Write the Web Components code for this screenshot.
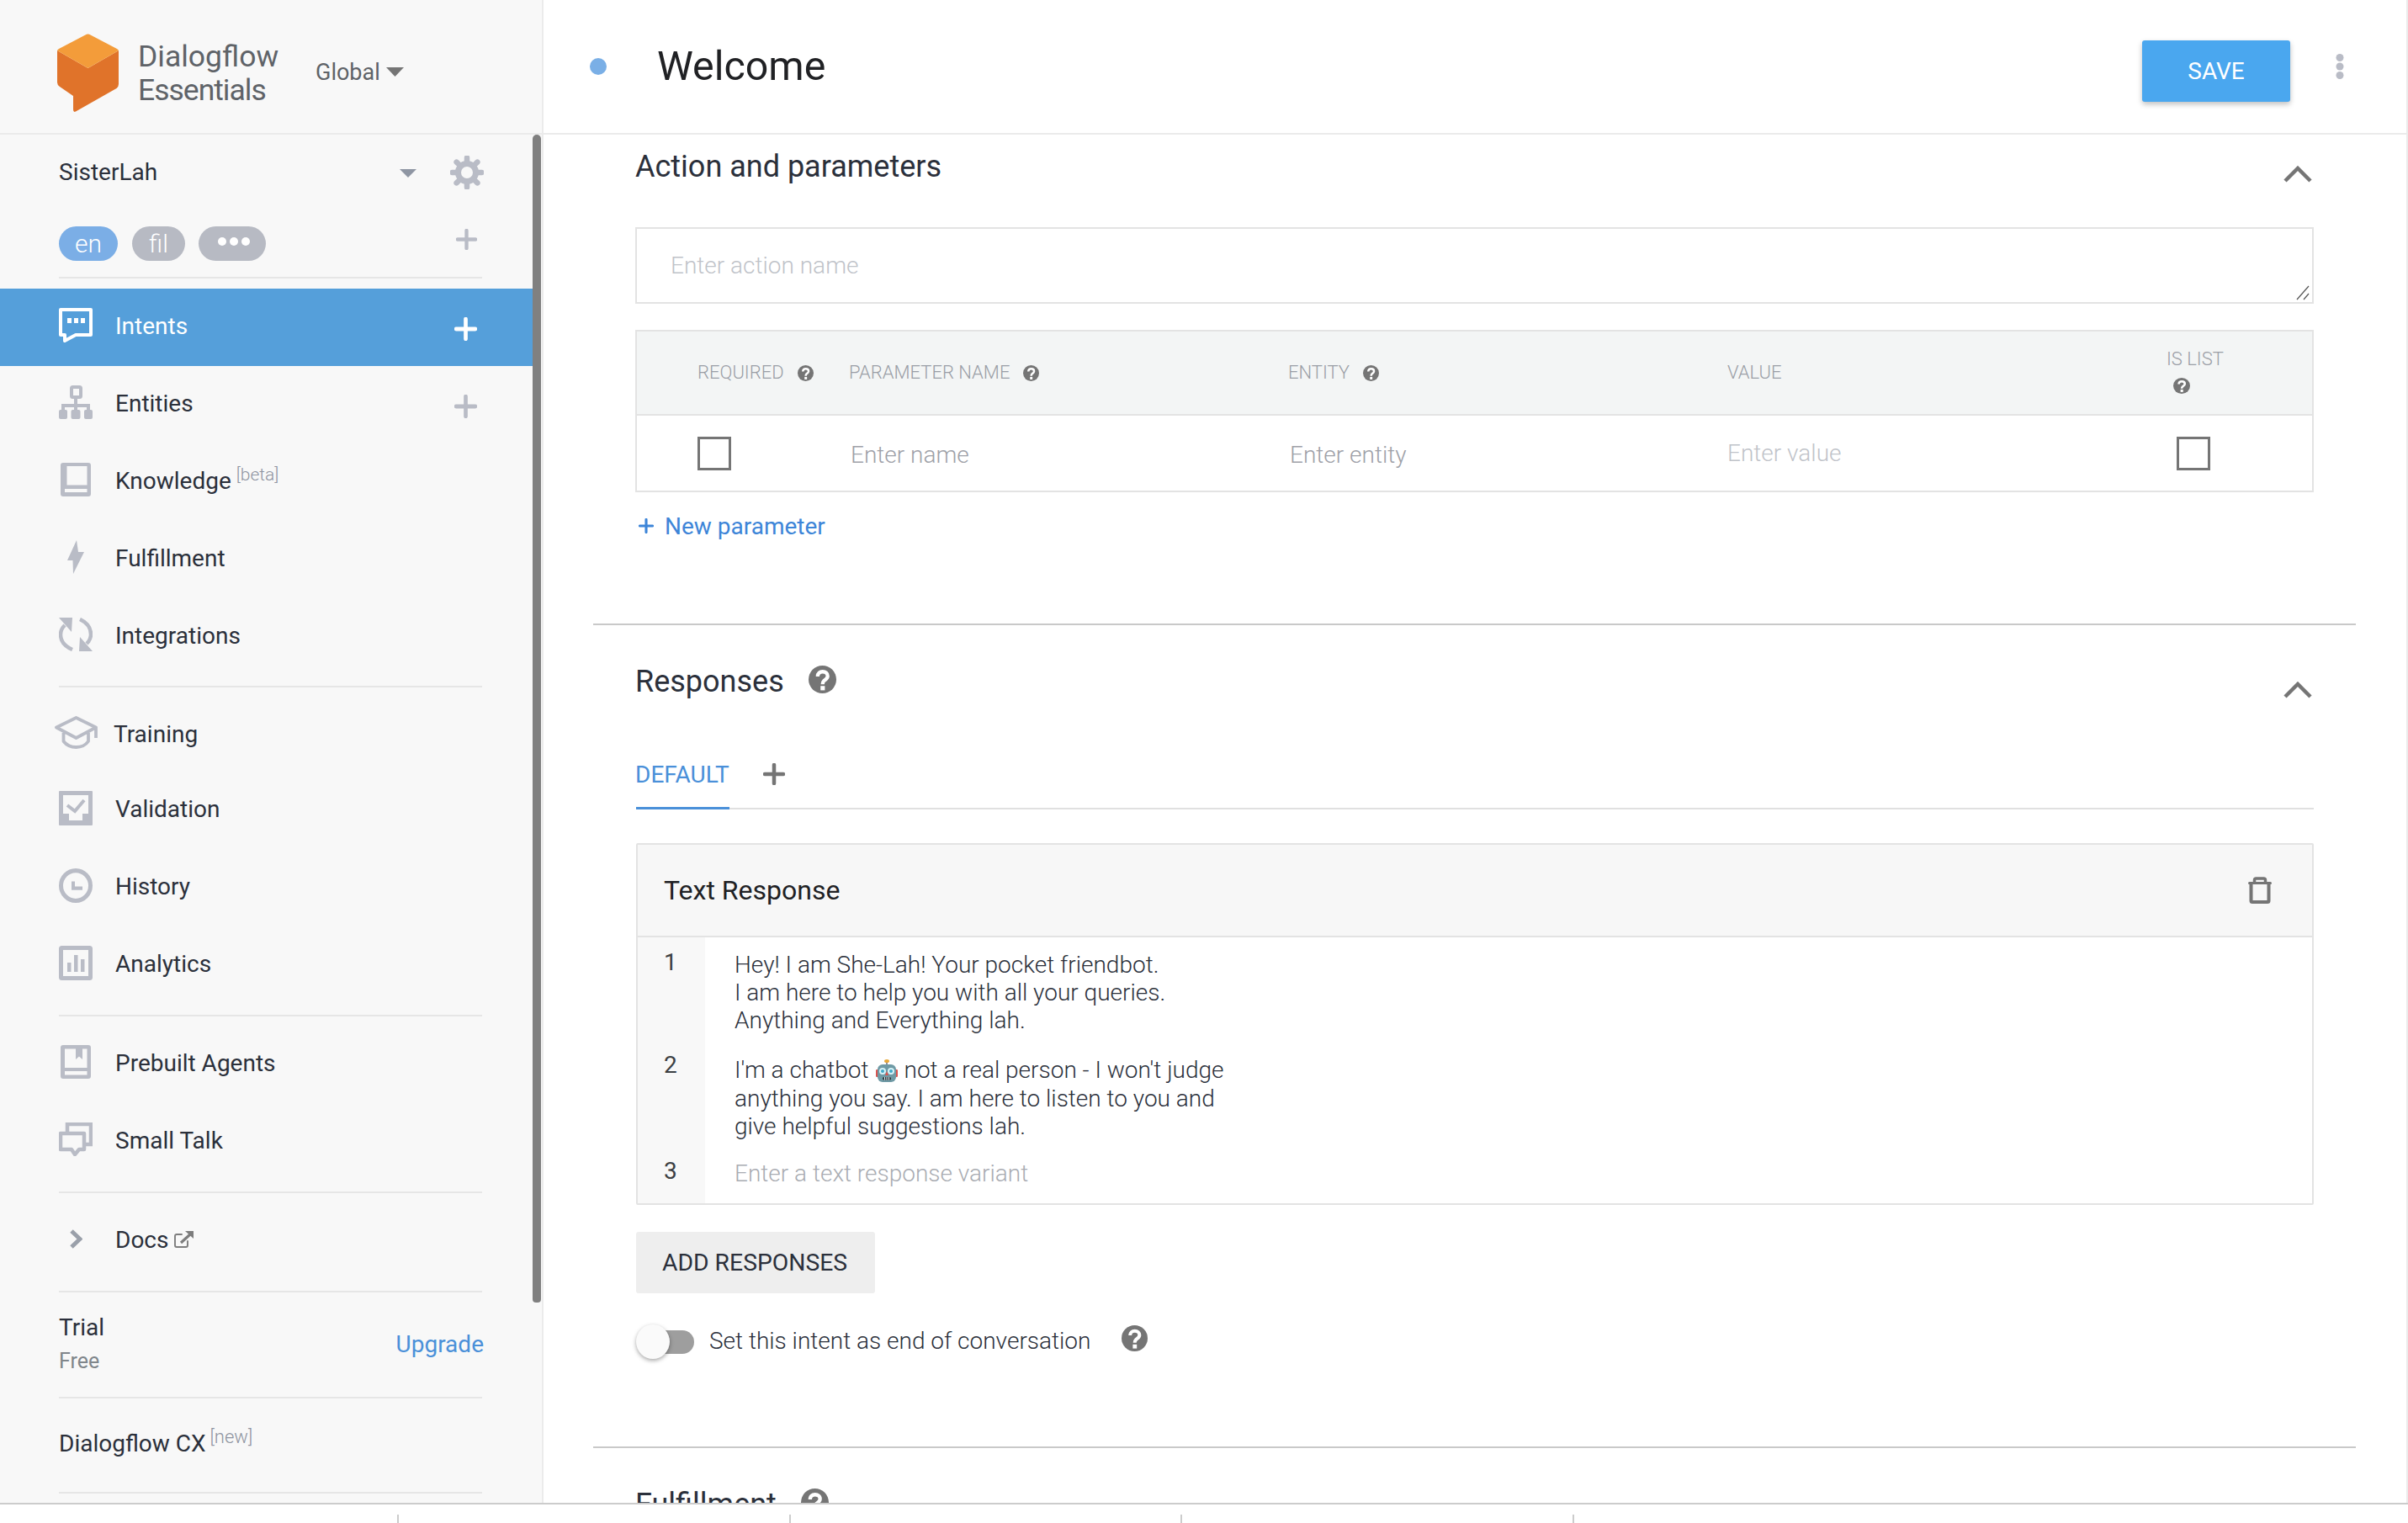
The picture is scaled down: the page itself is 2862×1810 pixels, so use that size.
<!DOCTYPE html>
<html lang="en">
<head>
<meta charset="utf-8">
<title>Dialogflow Essentials</title>
<style>
html,body{margin:0;padding:0;background:#fff;font-family:Roboto,"Liberation Sans",sans-serif;}
</style>
</head>
<body>
<df-app></df-app>
<script>
const ICONS = {
  logo:{vb:'0 0 73 93',s:`<path fill="#e0732a" d="M0 20L36.500 41L73 20V60Q73 63 70.500 65L22 92.500Q19 94 19 90V74L3 63Q0 61 0 58Z"/><path fill="#f39c3a" d="M33.500 1.500Q36.500-.5 39.500 1.500L71 18Q73 19.500 73 20L36.500 41L0 20Q0 19.500 2 18Z"/>`},
  caret:{vb:'0 0 20 11',s:`<path fill="currentColor" d="M0 0H20L10 11Z"/>`},
  gear:{vb:'0 0 40 40',s:`<circle cx="20" cy="20" r="10.500" fill="none" stroke="currentColor" stroke-width="7"/><g stroke="currentColor" stroke-width="6.500" stroke-linecap="round"><path d="M20 2.500V7M20 33V37.500M2.500 20H7M33 20H37.500M7.600 7.600L10.800 10.800M29.200 29.200L32.400 32.400M32.400 7.600L29.200 10.800M10.800 29.200L7.600 32.400"/></g>`},
  plus:{vb:'0 0 26 26',s:`<path d="M13 2V24M2 13H24" stroke="currentColor" stroke-width="4.500" stroke-linecap="round" fill="none"/>`},
  intents:{vb:'0 0 40 41',s:`<path d="M2 2H38V32H20L7 39V32H2Z" fill="none" stroke="currentColor" stroke-width="4" stroke-linejoin="round"/><path fill="currentColor" d="M10 12h5v6h-5zM18 12h5v6h-5zM26 12h5v6h-5z"/>`},
  entities:{vb:'0 0 40 40',s:`<path fill="none" stroke="currentColor" stroke-width="4" d="M20 14V24M5 32V24H35V32M20 24V32"/><rect x="15" y="2" width="11" height="12" rx="1.500" fill="none" stroke="currentColor" stroke-width="4"/><rect x="0" y="29" width="10" height="11" rx="2" fill="currentColor"/><rect x="14.500" y="29" width="11" height="11" rx="2" fill="currentColor"/><rect x="30" y="29" width="10" height="11" rx="2" fill="currentColor"/>`},
  book:{vb:'0 0 40 40',s:`<path fill="currentColor" fill-rule="evenodd" d="M5 0H35Q38 0 38 3V37Q38 40 35 40H5Q2 40 2 37V3Q2 0 5 0ZM9.500 4V26.500H33.500V4ZM7 31V35H33.500V31Z"/>`},
  bolt:{vb:'0 0 40 40',s:`<path fill="currentColor" d="M21 0L23 14H30L17 40L16.500 24H10Z"/>`},
  sync:{vb:'0 0 40 40',s:`<path fill="none" stroke="currentColor" stroke-width="4.500" d="M7 9Q2 14 2 20Q2 32 16 38M25 2Q38 8 38 20Q38 26 33 31"/><path fill="currentColor" d="M0 0H16L15 17ZM40 40H24L25 23Z"/>`},
  hat:{vb:'0 0 53 39',s:`<path fill="none" stroke="currentColor" stroke-width="3.800" stroke-linejoin="round" d="M26.500 2L50 13.500L26.500 26L3 13.500ZM11.500 20V30Q17 37 26.500 37Q36 37 41 30V20M50 13.500V26"/>`},
  validate:{vb:'0 0 40 41',s:`<path fill="currentColor" fill-rule="evenodd" d="M1 0H39Q40 0 40 1V40Q40 41 39 41H1Q0 41 0 40V1Q0 0 1 0ZM5 5V27H12V35H28V27H35V5Z"/><path fill="none" stroke="currentColor" stroke-width="4" d="M10 17L19 24L30 11"/>`},
  clock:{vb:'0 0 40 40',s:`<circle cx="20" cy="20" r="17.500" fill="none" stroke="currentColor" stroke-width="5"/><path fill="none" stroke="currentColor" stroke-width="4" d="M17 15V23H28"/>`},
  analytics:{vb:'0 0 40 41',s:`<rect x="2.500" y="2.500" width="35" height="36" rx="1" fill="none" stroke="currentColor" stroke-width="5"/><path fill="currentColor" d="M10 20h4.500v11H10zM18 11h4.500v20H18zM26 16h4.500v15H26z"/>`},
  prebuilt:{vb:'0 0 40 40',s:`<path fill="currentColor" fill-rule="evenodd" d="M5 0H35Q38 0 38 3V37Q38 40 35 40H5Q2 40 2 37V3Q2 0 5 0ZM7 4.500V27H33.500V4.500H28V17L24 13.500L20 17V4.500ZM7 31V35.500H33.500V31Z"/>`},
  talk:{vb:'0 0 40 40',s:`<path fill="none" stroke="currentColor" stroke-width="4.500" d="M10 12V2H38V26H31"/><path fill="none" stroke="currentColor" stroke-width="4.500" stroke-linejoin="round" d="M2 13H30V32H24L19 38L15 32H2Z"/>`},
  chevron:{vb:'0 0 16 25',s:`<path d="M3 3L13 12.500L3 22" fill="none" stroke="currentColor" stroke-width="5"/>`},
  ext:{vb:'0 0 23 20',s:`<path fill="none" stroke="currentColor" stroke-width="1.900" stroke-linecap="round" d="M9 4H3Q1 4 1 6V17Q1 19 3 19H14Q16 19 16 17V12"/><path stroke="currentColor" stroke-width="3.200" d="M8 14L19 4"/><path fill="currentColor" d="M13 0H23V9Z"/>`},
  dot:{vb:'0 0 20 20',s:`<circle cx="10" cy="10" r="10" fill="currentColor"/>`},
  kebab:{vb:'0 0 10 30',s:`<g fill="currentColor"><circle cx="5" cy="4.500" r="4.500"/><circle cx="5" cy="15" r="4.500"/><circle cx="5" cy="25.500" r="4.500"/></g>`},
  up:{vb:'0 0 34 20',s:`<path d="M2 18L17 3L32 18" fill="none" stroke="currentColor" stroke-width="4.500"/>`},
  help:{vb:'0 0 32 32',s:`<circle cx="16" cy="16" r="16" fill="currentColor"/><path d="M10.500 12.500C10.500 9 13 7 16.200 7C19.700 7 22 9.200 22 12C22 15 19.300 16 17.800 17.500C16.700 18.600 16.200 19.500 16.200 21.500" fill="none" stroke="#fff" stroke-width="4.200"/><rect x="13.800" y="23.500" width="5" height="5" fill="#fff"/>`},
  trash:{vb:'0 0 28 32',s:`<path fill="none" stroke="currentColor" stroke-width="4" stroke-linejoin="round" d="M3.500 7V28.500Q3.500 30 5 30H23Q24.500 30 24.500 28.500V7"/><path fill="none" stroke="currentColor" stroke-width="3" stroke-linecap="round" d="M1.500 7.500H26.500"/><path fill="none" stroke="currentColor" stroke-width="3.500" d="M7.500 6V4Q7.500 2 9.500 2H18.500Q20.500 2 20.500 4V6"/>`},
  grip:{vb:'0 0 16 18',s:`<path stroke="#555" stroke-width="1.200" d="M1 17L15 1M9 17L15 10"/>`},
  robot:{vb:'0 0 26 28',s:`<rect x="12" y="3" width="2" height="5" fill="#8f8f9a"/><ellipse cx="13" cy="3" rx="3" ry="2" fill="#e8a93a"/><rect x="0" y="13" width="3.500" height="9" rx="1.200" fill="#d9534f"/><rect x="22.500" y="13" width="3.500" height="9" rx="1.200" fill="#d9534f"/><rect x="2" y="7" width="22" height="21" rx="6" fill="#6f9aa5"/><circle cx="8" cy="15" r="4" fill="#d8f2f7"/><circle cx="18" cy="15" r="4" fill="#d8f2f7"/><circle cx="8" cy="15" r="2" fill="#3fa9c9"/><circle cx="18" cy="15" r="2" fill="#3fa9c9"/><path fill="#d9534f" d="M13 15L15 20H11Z"/><rect x="8" y="22" width="10" height="3.500" rx="1.500" fill="#2f3b42"/><path stroke="#dfe6e8" stroke-width="1" d="M10.500 22V25.500M13 22V25.500M15.500 22V25.500"/>`}
};
class DfIcon extends HTMLElement{
  connectedCallback(){
    if(this.shadowRoot) return;
    const r=this.attachShadow({mode:'open'});
    const i=ICONS[this.getAttribute('name')];
    const w=this.getAttribute('w')||40,h=this.getAttribute('h')||w;
    r.innerHTML=`<style>:host{display:inline-flex;flex:none;width:${w}px;height:${h}px}svg{display:block;width:100%;height:100%}</style><svg viewBox="${i.vb}" preserveAspectRatio="none" aria-hidden="true">${i.s}</svg>`;
  }
}
class DfNavItem extends HTMLElement{
  connectedCallback(){
    if(this.shadowRoot) return;
    const r=this.attachShadow({mode:'open'});
    const add=this.hasAttribute('add');
    r.innerHTML=`<style>
      :host{display:flex;align-items:center;box-sizing:border-box;height:var(--h,92px);width:633px;padding:0 66px 6px var(--pl,70px);font:400 28px/32px Roboto,sans-serif;color:#2b303b;--ic:#b9bcc6;}
      :host([active]){background:#559fda;color:#fff;--ic:#fff;}
      .ic{display:flex;width:var(--iw,40px);justify-content:center;color:var(--ic);flex:none;}
      .tx{margin-left:var(--gap,27px);margin-top:var(--ty,3px);flex:1;white-space:nowrap;}
      .pl{color:var(--ic);margin-top:10px;display:flex;}
    </style><span class="ic"><slot name="icon"></slot></span><span class="tx"><slot></slot></span>${add?'<span class="pl"><df-icon name="plus" w="27" h="28"></df-icon></span>':''}`;
  }
}
class DfChip extends HTMLElement{
  constructor(){super();this.attachShadow({mode:'open'}).innerHTML=`<style>
    :host{display:inline-flex;align-items:center;justify-content:center;box-sizing:border-box;height:41px;border-radius:20.500px;background:#b7bac3;color:#fff;font:300 30px/41px Roboto,sans-serif;}
    :host([on]){background:#7baee6;}
  </style><slot></slot>`;}
}
class DfDivider extends HTMLElement{
  constructor(){super();this.attachShadow({mode:'open'}).innerHTML=`<style>:host{display:block;height:2px;width:503px;margin:var(--m,12px) 0 var(--m,12px) 70px;background:#e6e6e6;}</style>`;}
}
class DfSidebar extends HTMLElement{
  constructor(){super();this.attachShadow({mode:'open'}).innerHTML=`<style>
    :host{display:block;position:relative;box-sizing:border-box;width:646px;height:1786px;background:#f8f8f8;border-right:2px solid #ebebeb;overflow:hidden;color:#2b303b;font:400 28px/32px Roboto,sans-serif;}
    .brand{display:flex;align-items:flex-start;box-sizing:border-box;height:160px;width:646px;padding:40px 0 0 68px;border-bottom:2px solid #ebebeb;}
    .name{width:211px;margin:7px 0 0 23px;font:400 35.500px/40px Roboto,sans-serif;color:#5f6368;flex:none;}
    .name span{letter-spacing:-1px;}
    .region{display:flex;align-items:center;gap:7px;margin-top:30px;color:#5f6368;font-size:27px;line-height:32px;}
    .region df-icon{color:#757575;margin-top:-1px;}
    .agent{display:flex;align-items:center;height:86px;width:633px;box-sizing:border-box;padding:0 58px 0 70px;}
    .agent .nm{flex:1;margin-top:3px;}
    .agent .cr{color:#8f96a3;margin:6px 40px 0 0;display:flex;}
    .agent .gr{color:#b9bcc6;margin-top:4px;display:flex;}
    .langs{display:flex;align-items:center;height:41px;margin-top:23px;padding-left:70px;width:497px;}
    .langs df-chip:nth-child(1){width:70px;}
    .langs df-chip:nth-child(2){width:63px;margin-left:17px;}
    .langs df-chip:nth-child(3){width:80px;margin-left:16px;}
    .langs .add{color:#b9bcc6;margin-left:auto;transform:translateY(-5px);display:flex;}
    .dots{display:flex;gap:4px;margin:-5px 0 0 4px;}
    .dots i{display:block;width:10px;height:10px;border-radius:50%;background:#fff;}
    sup{vertical-align:baseline;position:relative;top:-10px;font:300 21px/0 Roboto,sans-serif;color:#8e94a0;margin-left:6px;}
    .docs{display:inline-flex;align-items:center;gap:7px;}
    .docs df-icon{color:#7d7d7d;margin-top:-2px;}
    .plan{display:flex;align-items:center;box-sizing:border-box;height:124px;width:633px;padding:0 58px 0 70px;}
    .plan .t{flex:1;line-height:40px;}
    .plan .f{font-size:25px;color:#80868b;}
    .plan .u{color:#4a90d9;font-size:28px;margin-top:0;}
    .cx{box-sizing:border-box;height:111px;padding:34px 0 0 70px;line-height:40px;white-space:nowrap;}
    .cx sup{margin-left:5px;top:-10px;font-size:22px;}
    .thumb{position:absolute;left:633px;top:160px;width:10px;height:1388px;background:#808080;border-radius:5px 5px 4px 4px;}
    .tight{--m:0px;}
  </style>
  <div class="brand">
    <df-icon name="logo" w="73" h="93"></df-icon>
    <div class="name">Dialogflow<br><span>Essentials</span></div>
    <div class="region">Global<df-icon name="caret" w="21" h="11"></df-icon></div>
  </div>
  <div class="agent"><span class="nm">SisterLah</span><span class="cr"><df-icon name="caret" w="20" h="10"></df-icon></span><span class="gr"><df-icon name="gear" w="40" h="40"></df-icon></span></div>
  <div class="langs">
    <df-chip on>en</df-chip><df-chip>fil</df-chip><df-chip><span class="dots"><i></i><i></i><i></i></span></df-chip>
    <span class="add"><df-icon name="plus" w="25" h="25"></df-icon></span>
  </div>
  <df-divider style="--m:19px;margin-bottom:12px"></df-divider>
  <df-nav-item active add><df-icon slot="icon" name="intents" w="40" h="41"></df-icon>Intents</df-nav-item>
  <df-nav-item add><df-icon slot="icon" name="entities" w="40" h="40"></df-icon>Entities</df-nav-item>
  <df-nav-item><df-icon slot="icon" name="book" w="40" h="40"></df-icon>Knowledge<sup>[beta]</sup></df-nav-item>
  <df-nav-item><df-icon slot="icon" name="bolt" w="40" h="40"></df-icon>Fulfillment</df-nav-item>
  <df-nav-item><df-icon slot="icon" name="sync" w="40" h="40"></df-icon>Integrations</df-nav-item>
  <df-divider></df-divider>
  <df-nav-item style="--h:88px;--pl:64px;--iw:53px;--gap:18px;--ty:5px"><df-icon slot="icon" name="hat" w="53" h="39"></df-icon>Training</df-nav-item>
  <df-nav-item><df-icon slot="icon" name="validate" w="40" h="41"></df-icon>Validation</df-nav-item>
  <df-nav-item><df-icon slot="icon" name="clock" w="40" h="41"></df-icon>History</df-nav-item>
  <df-nav-item><df-icon slot="icon" name="analytics" w="40" h="41"></df-icon>Analytics</df-nav-item>
  <df-divider style="--m:13px;margin-bottom:11px"></df-divider>
  <df-nav-item><df-icon slot="icon" name="prebuilt" w="40" h="40"></df-icon>Prebuilt Agents</df-nav-item>
  <df-nav-item><df-icon slot="icon" name="talk" w="40" h="40"></df-icon>Small Talk</df-nav-item>
  <df-divider style="--m:13px;margin-bottom:11px"></df-divider>
  <df-nav-item><df-icon slot="icon" name="chevron" w="16" h="25" style="color:#9aa0aa"></df-icon><span class="docs">Docs<df-icon name="ext" w="23" h="20"></df-icon></span></df-nav-item>
  <df-divider style="--m:13px;margin-bottom:0"></df-divider>
  <div class="plan"><div class="t">Trial<div class="f">Free</div></div><span class="u">Upgrade</span></div>
  <df-divider class="tight"></df-divider>
  <div class="cx">Dialogflow CX<sup>[new]</sup></div>
  <df-divider class="tight"></df-divider>
  <div class="thumb"></div>`;}
}
class DfTopbar extends HTMLElement{
  constructor(){super();this.attachShadow({mode:'open'}).innerHTML=`<style>
    :host{display:flex;align-items:center;box-sizing:border-box;height:160px;border-bottom:2px solid #ebebeb;padding:0 74px 1px 55px;background:#fff;}
    .d{color:#7aafe6;display:flex;}
    h1{flex:1;margin:0 0 0 60px;font:400 48.300px/60px Roboto,sans-serif;color:#202124;}
    .save{display:flex;align-items:center;justify-content:center;box-sizing:border-box;width:176px;height:73px;margin-top:12px;background:#4aa7ef;border-radius:3px;color:#fff;font:400 28px/30px Roboto,sans-serif;box-shadow:0 3px 6px rgba(0,0,0,.25);}
    .k{color:#b9bcc6;display:flex;margin-left:54px;}
  </style><span class="d"><df-icon name="dot" w="20" h="20"></df-icon></span><h1>Welcome</h1><span class="save">SAVE</span><span class="k"><df-icon name="kebab" w="10" h="30"></df-icon></span>`;}
}
class DfSectionHead extends HTMLElement{
  constructor(){super();this.attachShadow({mode:'open'}).innerHTML=`<style>
    :host{display:flex;align-items:center;height:44px;font:400 36px/44px Roboto,sans-serif;color:#2b303b;}
    .t{display:flex;align-items:center;flex:1;gap:29px;white-space:nowrap;margin-left:-1px;}
    .t span{transform:translateY(var(--ty,2px));}
    .c{color:#757575;margin:24px 2px 0 0;display:flex;}
    ::slotted(df-icon){color:#757575;margin-top:-1px;}
  </style><span class="t"><span><slot></slot></span><slot name="after"></slot></span><span class="c"><df-icon name="up" w="34" h="20"></df-icon></span>`;}
}
class DfParamTable extends HTMLElement{
  constructor(){super();this.attachShadow({mode:'open'}).innerHTML=`<style>
    :host{display:block;border:2px solid #e3e3e3;font:300 22px/26px Roboto,sans-serif;color:#9a9ea6;}
    .row{display:grid;grid-template-columns:252px 522px 522px 523px 1fr;align-items:center;}
    .head{height:98px;background:#f3f5f5;border-bottom:2px solid #e3e3e3;}
    .body{height:89px;font:300 28px/32px Roboto,sans-serif;}
    .c{display:flex;align-items:center;gap:16px;white-space:nowrap;}
    .c:first-child{padding-left:72px;}
    .c df-icon{color:#757575;}
    .col{flex-direction:column;align-items:flex-start;gap:9px;transform:translateY(-2px);}
    .col df-icon{margin-left:8px;}
    .cb{display:block;box-sizing:border-box;width:40px;height:40px;border:3px solid #757575;background:#fff;}
    .ph{color:#9ea1a8;transform:translateY(2px);}
    .ph2{color:#c0c3c9;}
    .cell{padding-left:2px}
  </style>
  <div class="row head">
    <span class="c">REQUIRED<df-icon name="help" w="19" h="19"></df-icon></span>
    <span class="c">PARAMETER NAME<df-icon name="help" w="19" h="19"></df-icon></span>
    <span class="c">ENTITY<df-icon name="help" w="19" h="19"></df-icon></span>
    <span class="c">VALUE</span>
    <span class="c col" style="margin-left:-1px">IS LIST<df-icon name="help" w="20" h="19"></df-icon></span>
  </div>
  <div class="row body">
    <span class="c"><span class="cb"></span></span>
    <span class="c ph cell">Enter name</span>
    <span class="c ph cell">Enter entity</span>
    <span class="c ph2">Enter value</span>
    <span class="c" style="padding-left:11px"><span class="cb"></span></span>
  </div>`;}
}
class DfResponseCard extends HTMLElement{
  constructor(){super();this.attachShadow({mode:'open'}).innerHTML=`<style>
    :host{display:block;border:2px solid #e3e3e3;border-radius:2px;font:300 28px/33px Roboto,sans-serif;color:#2b303b;}
    .h{display:flex;align-items:center;box-sizing:border-box;height:110px;padding:0 48px 0 31px;background:#f7f7f7;border-bottom:2px solid #e3e3e3;font:400 32px/36px Roboto,sans-serif;color:#202124;}
    .h span{flex:1;}
    .h df-icon{color:#757575;}
    .r{display:grid;grid-template-columns:80px 1fr;}
    .n{background:#f8f8f8;padding:13px 0 0 31px;font-weight:400;color:#3c4043;}
    .t{padding:16px 0 7px 35px;}
    .l2{height:35px;display:flex;align-items:center;gap:8px;line-height:35px;}
    .ph{color:#a9acb2;}
  </style>
  <div class="h"><span>Text Response</span><df-icon name="trash" w="28" h="32"></df-icon></div>
  <div class="r" style="height:122px"><div class="n">1</div><div class="t">Hey! I am She-Lah! Your pocket friendbot.<br>I am here to help you with all your queries.<br>Anything and Everything lah.</div></div>
  <div class="r" style="height:126px"><div class="n">2</div><div class="t" style="padding-top:18px"><div class="l2"><span>I'm a chatbot</span><df-icon name="robot" w="26" h="28"></df-icon><span>not a real person - I won't judge</span></div>anything you say. I am here to listen to you and<br>give helpful suggestions lah.</div></div>
  <div class="r" style="height:68px"><div class="n">3</div><div class="t ph">Enter a text response variant</div></div>`;}
}
class DfToggle extends HTMLElement{
  constructor(){super();this.attachShadow({mode:'open'}).innerHTML=`<style>
    :host{display:block;position:relative;width:69px;height:41px;flex:none;}
    .tr{position:absolute;left:19px;top:7px;width:50px;height:28px;border-radius:14px;background:#9e9e9e;}
    .th{position:absolute;left:0;top:0;width:40px;height:41px;border-radius:50%;background:#fafafa;box-shadow:0 2px 5px rgba(0,0,0,.35);}
  </style><div class="tr"></div><div class="th"></div>`;}
}
class DfMain extends HTMLElement{
  constructor(){super();this.attachShadow({mode:'open'}).innerHTML=`<style>
    :host{display:block;box-sizing:border-box;width:2216px;height:1786px;border-right:2px solid #ebebeb;overflow:hidden;background:#fff;font:400 28px/32px Roboto,sans-serif;color:#2b303b;}
    .scroll{padding:0 60px 0 59px;}
    .sec{padding:0 50px 0 51px;}
    .first{padding-top:13px;}
    .ta{position:relative;display:flex;align-items:center;box-sizing:border-box;height:91px;margin:53px 0 31px -1px;border:2px solid #e3e3e3;padding:1px 0 0 40px;font:300 28px/32px Roboto,sans-serif;color:#c0c3c9;}
    .ta df-icon{position:absolute;right:3px;bottom:2px;}
    df-param-table{margin-left:-1px;}
    .np{display:flex;align-items:center;height:32px;margin-top:25px;color:#3d85d8;padding-left:3px;gap:13px;}
    .np df-icon{margin-top:-3px;}
    hr{display:block;height:2px;border:0;margin:0;background:#c9c9c9;}
    .tabs{display:flex;align-items:center;height:80px;margin-top:50px;border-bottom:2px solid #e0e0e0;}
    .tab{box-sizing:border-box;height:82px;padding-top:1px;line-height:80px;color:#4a90d9;border-bottom:3px solid #4a90d9;white-space:nowrap;margin-bottom:-2px;text-indent:-1px;}
    .tabs df-icon{color:#757575;margin-left:40px;}
    df-response-card{margin-top:40px;}
    .btn{display:flex;align-items:center;box-sizing:border-box;height:73px;width:284px;margin-top:32px;padding-left:31px;background:#eee;border-radius:3px;color:#2b303b;font-size:28.300px;white-space:nowrap;}
    .end{display:flex;align-items:center;gap:18px;height:41px;margin-top:37px;font:300 28px/32px Roboto,sans-serif;color:#2b303b;}
    .end span{transform:translateY(-1px);}
    .end df-icon{color:#757575;margin-left:19px;transform:translateY(-4px);}
  </style>
  <df-topbar></df-topbar>
  <div class="scroll">
    <div class="sec first">
      <df-section-head style="--ty:3px">Action and parameters</df-section-head>
      <div class="ta">Enter action name<df-icon name="grip" w="16" h="18"></df-icon></div>
      <df-param-table></df-param-table>
      <div class="np"><df-icon name="plus" w="18" h="18"></df-icon><span>New parameter</span></div>
    </div>
    <hr style="margin-top:99px">
    <div class="sec" style="padding-top:43px">
      <df-section-head>Responses<df-icon slot="after" name="help" w="33" h="33"></df-icon></df-section-head>
      <div class="tabs"><span class="tab">DEFAULT</span><df-icon name="plus" w="26" h="26"></df-icon></div>
      <df-response-card></df-response-card>
      <div class="btn">ADD RESPONSES</div>
      <div class="end"><df-toggle></df-toggle><span>Set this intent as end of conversation</span><df-icon name="help" w="31" h="31"></df-icon></div>
    </div>
    <hr style="margin-top:104px">
    <div class="sec" style="padding-top:43px">
      <df-section-head>Fulfillment<df-icon slot="after" name="help" w="33" h="33"></df-icon></df-section-head>
    </div>
  </div>`;}
}
class DfApp extends HTMLElement{
  constructor(){super();this.attachShadow({mode:'open'}).innerHTML=`<style>
    :host{display:block;width:2862px;height:1810px;overflow:hidden;background:#fff;}
    .shell{display:flex;height:1786px;}
    .foot{box-sizing:border-box;height:24px;border-top:2px solid #ccc;padding:12px 0 0 472px;display:flex;}
    .foot i{display:block;width:465.500px;height:10px;border-left:2px solid #ccc;box-sizing:border-box;}
  </style><div class="shell"><df-sidebar></df-sidebar><df-main></df-main></div><div class="foot"><i></i><i></i><i></i><i></i></div>`;}
}
customElements.define('df-icon',DfIcon);
customElements.define('df-nav-item',DfNavItem);
customElements.define('df-chip',DfChip);
customElements.define('df-divider',DfDivider);
customElements.define('df-sidebar',DfSidebar);
customElements.define('df-topbar',DfTopbar);
customElements.define('df-section-head',DfSectionHead);
customElements.define('df-param-table',DfParamTable);
customElements.define('df-response-card',DfResponseCard);
customElements.define('df-toggle',DfToggle);
customElements.define('df-main',DfMain);
customElements.define('df-app',DfApp);
</script>
</body>
</html>
